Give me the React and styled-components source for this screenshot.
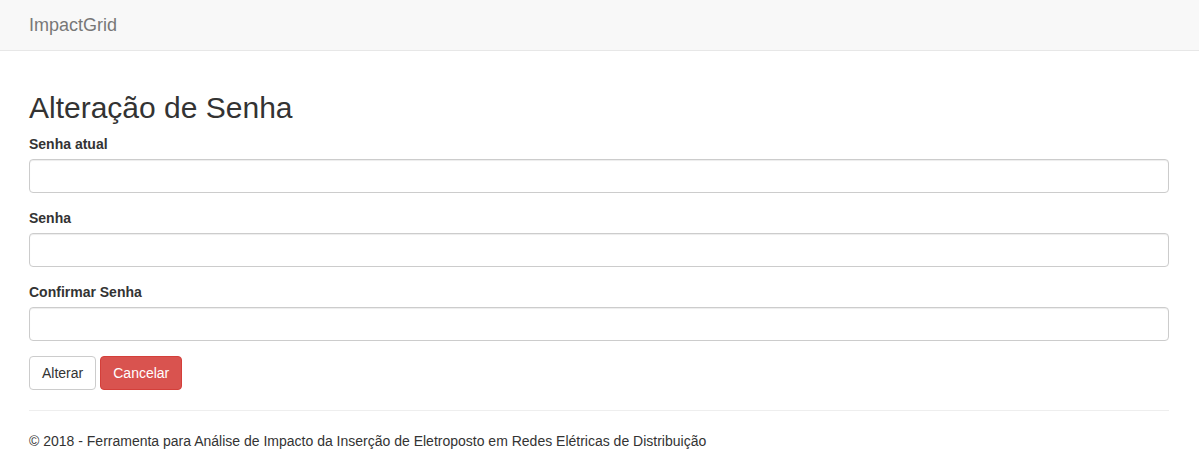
import React from "react";
import styled, { createGlobalStyle } from "styled-components";

const GlobalStyle = createGlobalStyle`
  * { box-sizing: border-box; }
  html, body { margin: 0; padding: 0; background: #fff; }
  body {
    font-family: "Liberation Sans", Arial, Helvetica, sans-serif;
    font-size: 14px;
    line-height: 1.42857143;
    color: #333;
  }
`;

const Navbar = styled.nav`
  height: 51px;
  background: #f8f8f8;
  border-bottom: 1px solid #e7e7e7;
  margin-bottom: 20px;
  display: flex;
  align-items: center;
  padding: 0 30px 0 29px;
`;

const Brand = styled.a`
  font-size: 18px;
  line-height: 20px;
  color: #777;
  text-decoration: none;
`;

const Container = styled.main`
  padding: 20px 30px 0 29px;
`;

const Title = styled.h2`
  font-size: 30px;
  font-weight: 500;
  line-height: 1.1;
  margin: 0 0 10px;
  color: #333;
`;

const FormGroup = styled.div`
  margin-bottom: 15px;
`;

const Label = styled.label`
  display: inline-block;
  font-weight: 700;
  margin-bottom: 5px;
`;

const Input = styled.input`
  display: block;
  width: 100%;
  height: 34px;
  padding: 6px 12px;
  font-size: 14px;
  font-family: inherit;
  color: #555;
  background: #fff;
  border: 1px solid #ccc;
  border-radius: 4px;
  box-shadow: inset 0 1px 1px rgba(0, 0, 0, 0.075);
  outline: none;
`;

const Actions = styled.div`
  display: flex;
  gap: 4px;
`;

const Button = styled.button`
  height: 34px;
  padding: 6px 12px;
  font-size: 14px;
  font-family: inherit;
  line-height: 1.42857143;
  border-radius: 4px;
  border: 1px solid ${(p) => (p.$danger ? "#d43f3a" : "#ccc")};
  background: ${(p) => (p.$danger ? "#d9534f" : "#fff")};
  color: ${(p) => (p.$danger ? "#fff" : "#333")};
  cursor: pointer;
`;

const Rule = styled.hr`
  margin: 20px 0;
  border: 0;
  border-top: 1px solid #eee;
`;

const Footer = styled.footer`
  p { margin: 0 0 10px; }
`;

export default function App() {
  return (
    <>
      <GlobalStyle />
      <Navbar>
        <Brand href="#">ImpactGrid</Brand>
      </Navbar>
      <Container>
        <Title>Alteração de Senha</Title>
        <form onSubmit={(e) => e.preventDefault()}>
          <FormGroup>
            <Label htmlFor="atual">Senha atual</Label>
            <Input id="atual" type="password" />
          </FormGroup>
          <FormGroup>
            <Label htmlFor="senha">Senha</Label>
            <Input id="senha" type="password" />
          </FormGroup>
          <FormGroup>
            <Label htmlFor="confirmar">Confirmar Senha</Label>
            <Input id="confirmar" type="password" />
          </FormGroup>
          <Actions>
            <Button type="submit">Alterar</Button>
            <Button type="button" $danger>Cancelar</Button>
          </Actions>
        </form>
        <Rule />
        <Footer>
          <p>© 2018 - Ferramenta para Análise de Impacto da Inserção de Eletroposto em Redes Elétricas de Distribuição</p>
        </Footer>
      </Container>
    </>
  );
}
